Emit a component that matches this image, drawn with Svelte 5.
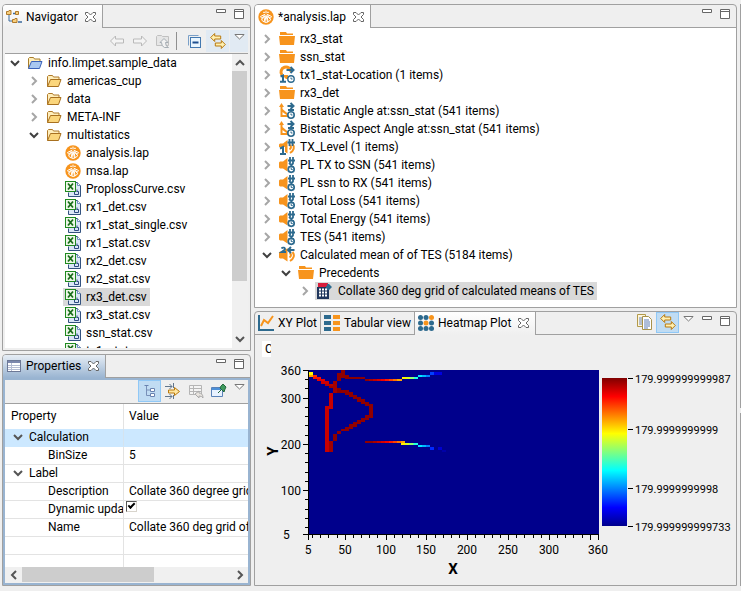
<script>
  const navRows = [
    { level: 0, state: 'open', icon: 'project', text: 'info.limpet.sample_data' },
    { level: 1, state: 'closed', icon: 'dir', text: 'americas_cup' },
    { level: 1, state: 'closed', icon: 'dir', text: 'data' },
    { level: 1, state: 'closed', icon: 'dir', text: 'META-INF' },
    { level: 1, state: 'open', icon: 'dir', text: 'multistatics' },
    { level: 2, icon: 'limpet', text: 'analysis.lap' },
    { level: 2, icon: 'limpet', text: 'msa.lap' },
    ...['ProplossCurve', 'rx1_det', 'rx1_stat_single', 'rx1_stat', 'rx2_det', 'rx2_stat', 'rx3_det', 'rx3_stat', 'ssn_stat', 'tx1_stat'].map(
      (n) => ({ level: 2, icon: 'csv', text: n + '.csv', selected: n === 'rx3_det' })
    )
  ];

  const dataRows = [
    { level: 0, state: 'closed', icon: 'folder', text: 'rx3_stat' },
    { level: 0, state: 'closed', icon: 'folder', text: 'ssn_stat' },
    { level: 0, state: 'closed', icon: 'location', text: 'tx1_stat-Location (1 items)' },
    { level: 0, state: 'closed', icon: 'folder', text: 'rx3_det' },
    { level: 0, state: 'closed', icon: 'angle', text: 'Bistatic Angle at:ssn_stat (541 items)' },
    { level: 0, state: 'closed', icon: 'angle', text: 'Bistatic Aspect Angle at:ssn_stat (541 items)' },
    { level: 0, state: 'closed', icon: 'level', text: 'TX_Level (1 items)' },
    { level: 0, state: 'closed', icon: 'sound', text: 'PL TX to SSN (541 items)' },
    { level: 0, state: 'closed', icon: 'sound', text: 'PL ssn to RX (541 items)' },
    { level: 0, state: 'closed', icon: 'sound', text: 'Total Loss (541 items)' },
    { level: 0, state: 'closed', icon: 'sound', text: 'Total Energy (541 items)' },
    { level: 0, state: 'closed', icon: 'sound', text: 'TES (541 items)' },
    { level: 0, state: 'open', icon: 'grid2', text: 'Calculated mean of of TES (5184 items)' },
    { level: 1, state: 'open', icon: 'folder', text: 'Precedents' },
    { level: 2, state: 'closed', icon: 'calc', text: 'Collate 360 deg grid of calculated means of TES', selected: true }
  ];

  const props = [
    { group: true, name: 'Calculation', value: '', selected: true },
    { name: 'BinSize', value: '5' },
    { group: true, name: 'Label', value: '' },
    { name: 'Description', value: 'Collate 360 degree grid' },
    { name: 'Dynamic update', check: true },
    { name: 'Name', value: 'Collate 360 deg grid of' },
    { name: '', value: '' },
    { name: '', value: '' }
  ];

  let dynamic = $state(true);

  // Plot area inside the chart drawing
  const L = 54, T = 36, W = 290, H = 164;
  const px = (v) => Math.round(L + ((v - 5) / 355) * W);
  const py = (v) => Math.round(T + H - ((v - 5) / 355) * H);
  const xMinor = Array.from({ length: 36 }, (_, i) => (i + 1) * 10);
  const yMinor = Array.from({ length: 18 }, (_, i) => (i + 1) * 20);
  const xLabels = [5, 50, 100, 150, 200, 250, 300, 360];
  const yLabels = [360, 300, 200, 100, 5];

  // x, y, width, height, colour of each run of equal cells
  const cells = [
    [0, 2, 4, 3, '#ffff00'], [0, 5, 4, 2, '#ffa000'],
    [4, 5, 4, 2, '#ff3000'], [4, 7, 8, 2, '#ff1000'], [8, 9, 8, 2, '#e80000'], [12, 11, 8, 3, '#d00000'],
    [16, 14, 8, 2, '#b80000'], [20, 16, 8, 2, '#a00000'],
    [32, 0, 4, 3, '#900000'], [28, 3, 8, 2, '#900000'], [28, 5, 4, 6, '#900000'], [32, 5, 8, 3, '#900000'], [36, 7, 20, 2, '#8c0000'],
    [24, 11, 4, 12, '#a40000'], [28, 18, 4, 5, '#8c0000'],
    [32, 20, 8, 3, '#900000'], [36, 22, 8, 3, '#900000'], [40, 25, 8, 2, '#900000'], [44, 27, 8, 2, '#900000'],
    [48, 29, 8, 3, '#900000'], [52, 32, 8, 2, '#900000'], [56, 34, 8, 2, '#900000'],
    [60, 34, 4, 14, '#900000'], [56, 45, 8, 3, '#900000'], [52, 48, 8, 2, '#900000'], [48, 50, 8, 2, '#900000'],
    [44, 52, 8, 2, '#900000'], [40, 54, 8, 3, '#900000'], [36, 57, 8, 2, '#900000'], [32, 59, 8, 2, '#900000'],
    [28, 61, 4, 3, '#900000'], [24, 64, 4, 7, '#8c0000'],
    [20, 23, 4, 16, '#c80000'], [16, 36, 4, 46, '#c80000'], [20, 71, 4, 11, '#a00000']
  ];
  const hot = ['#900000', '#900000', '#a80000', '#c00000', '#d80000', '#f00000', '#ff1800', '#ff4000', '#ff7000', '#ffa800'];
  const mild = ['#fff000', '#d8ff20', '#90ff70', '#50ffb0'];
  const cool = ['#00e8ff', '#00b8ff', '#0080ff'];
  hot.forEach((c, i) => cells.push([52 + i * 4, i < 1 ? 7 : 9, 4, 2, c], [56 + i * 4, 71, 4, 2, c]));
  mild.forEach((c, i) => cells.push([93 + i * 4, 7, 4, 2, c], [92 + i * 4, 73, 4, 2, c]));
  cool.forEach((c, i) => cells.push([109 + i * 4, 5, 4, 2, c], [109 + i * 4, 75, 4, 2, c]));
  cells.push([121, 2, 4, 3, '#0040ff'], [125, 2, 8, 3, '#0000e0'], [121, 77, 4, 3, '#0028ff'], [129, 77, 4, 3, '#0000d0'], [133, 80, 4, 2, '#0000a8']);
  cells.push([89, 9, 4, 2, '#ffa800'], [105, 73, 4, 2, '#20ffe0'], [105, 7, 4, 2, '#20ffe0']);

  const scale = [
    [44, '179.999999999987'],
    [95, '179.9999999999'],
    [154, '179.9999999998'],
    [192, '179.999999999733']
  ];
</script>

{#snippet icon(name)}
  <svg class="ic" viewBox="0 0 16 16" aria-hidden="true">
    {#if name === 'project' || name === 'dir'}
      {@const blue = name === 'project'}
      <path d="M1.5 13.5V3.5l1-1h4l1 1.500h5.500v3" fill="#ffeebb" stroke={blue ? '#a77c2b' : '#b07a2a'} />
      <path d="M4.500 6.500h10.500l-2.500 7H1.500z" fill={blue ? '#a9c8f0' : '#fbd67c'} stroke={blue ? '#3a62b8' : '#a8701f'} />
    {:else if name === 'limpet'}
      <circle cx="8" cy="8" r="7.700" fill="#f7941d" />
      <g stroke="#fff" stroke-width="1" stroke-linecap="round" fill="none">
        <path d="M6.500 5.500L2.500 7.500l1.200 1.700zM7 7l-3.500 4 2.300 1.800zM8 7l-1.200 6.300h2.400zM9 7l1.200 5.800L12.500 11zM9.500 5.500l4 2-1.200 1.700z" stroke-linejoin="round" />
        <path d="M5.500 3.300h1.200M9.300 3.300h1.200M8 2v2" />
      </g>
    {:else if name === 'csv'}
      <path d="M6.500 1.500h6l3 3v11h-12v-4" fill="#dbe6f7" stroke="#33527f" />
      <path d="M12.500 1.500v3h3" fill="#fff" stroke="#6f8fbd" />
      <rect x=".5" y=".5" width="10" height="10" fill="#eef8e8" stroke="#1f8a1f" />
      <path d="M3 2.500l5 6M8 2.500l-5 6" stroke="#1b6e1b" stroke-width="1.800" />
      <path d="M9.500 10.500v3h4v-3h-2M12 8.500v2" fill="none" stroke="#2d4a80" />
    {:else if name === 'folder'}
      <path d="M1 1h6l1 1.500h6V4H1zM0 5h16l-1 9H1z" fill="#f7941d" />
    {:else if name === 'location'}
      <path d="M3 8a5 5 0 1 1 9-3" fill="none" stroke="#f7941d" stroke-width="3" />
      <path d="M3 8h6v4H7z" fill="#f7941d" />
      <path d="M7.500 3h6M11.500 0L14.500 3l-3 3" fill="none" stroke="#2d6a8e" stroke-width="2" />
      <path d="M1.500 9.500L4 8.500v6M1 14.700h6" fill="none" stroke="#2d6a8e" stroke-width="2" />
      <circle cx="12" cy="12" r="3.200" fill="#fff" stroke="#2d6a8e" stroke-width="1.400" /><path d="M12 10.500V12h1.500" fill="none" stroke="#2d6a8e" />
    {:else if name === 'angle'}
      <path d="M1.500 14V2h2v4l7 6v2z" fill="#f7941d" /><path d="M0 4l2.500-4L5 4z" fill="#f7941d" />
      <path d="M3.500 9v3h4z" fill="#fff" />
      <path d="M8.500 3h5M11.500 0L14.500 3l-3 3M9 7h6" fill="none" stroke="#2d6a8e" stroke-width="2" />
      <circle cx="12" cy="12" r="3.200" fill="#fff" stroke="#2d6a8e" stroke-width="1.600" /><path d="M12 10.500V12h1.500" fill="none" stroke="#2d6a8e" />
    {:else if name === 'level' || name === 'sound' || name === 'grid2'}
      <path d="M0 5.500l1-1h3L8.500 1v13.500L4 11.500H1l-1-1z" fill="#f7941d" />
      {#if name === 'sound'}
        <path d="M11 0v6M14 0v6M9 3.500h7M10 6l4.500 4M14.500 6l-5 5" fill="none" stroke="#2d6a8e" stroke-width="1.800" />
        <circle cx="12.200" cy="12.300" r="3" fill="#fff" stroke="#2d6a8e" stroke-width="1.700" /><path d="M12.200 10.500v2h1.500" fill="none" stroke="#2d6a8e" />
      {:else}
        <path d="M10.500 6c2 1 2 3 0 4.500M13.500 5c2.500 3 1.500 6.500-2.500 9" fill="none" stroke="#f7941d" stroke-width="2" />
        {#if name === 'level'}
          <path d="M0 8h6v8H0z" fill="#fff" /><path d="M1 9.500L4 8v6.500M1 15h6" fill="none" stroke="#2d6a8e" stroke-width="2" />
          <path d="M10.500 0v7M13.500 0v7M8.500 3.500h7.500" stroke="#2d6a8e" stroke-width="1.800" />
        {:else}
          <path d="M2.500 1.500c1-1.500 4-1 3.500 1L2.500 5H7" fill="none" stroke="#2d6a8e" stroke-width="1.800" />
          <path d="M15.500 3H9M12 0L9 3l3 3" fill="none" stroke="#2d6a8e" stroke-width="2" />
        {/if}
      {/if}
    {:else if name === 'calc'}
      <path d="M0 4h12v12H0z" fill="#20365c" /><path d="M1 0h10v4H1z" fill="#d81e3c" />
      <path d="M10 1h2l3 3-3 3H9V3h1z" fill="#2d6a8e" />
      <path d="M2 6.500h9M2 9.500h9M2 12.500h9" stroke="#fff" stroke-width="1.800" stroke-dasharray="2 1" />
    {:else if name === 'nav'}
      <path d="M.5 2.500h2l.5-1h2v4H.500zM6.500 10.500h2l.5-1h2v4h-4.500z" fill="#f8cf7c" stroke="#b07a2a" />
      <path d="M3 6v6h3" fill="none" stroke="#3c6a9c" /><path d="M7 4.500h3M12 13h4" stroke="#3c6a9c" stroke-width="1.500" />
      <path d="M9.500 2.500h3v3h-3z" fill="#f8cf7c" stroke="#b07a2a" />
    {:else if name === 'table'}
      <rect x="1.500" y="2.500" width="13" height="11" fill="#fff" stroke="#6c7896" /><path d="M2 3h12v2H2z" fill="#7c88ad" />
      <path d="M2 7.500h12M2 9.500h12M2 11.500h12M5.500 5v8" stroke="#b5bdd3" />
    {:else if name === 'back'}
      <path d="M1.500 8L6.500 3v3h8v4h-8v3z" fill="#f4f4f4" stroke="#b9b9b9" />
    {:else if name === 'fwd'}
      <path d="M14.500 8L9.500 3v3h-8v4h8v3z" fill="#f4f4f4" stroke="#b9b9b9" />
    {:else if name === 'up'}
      <path d="M1.500 12.500V3.500l1-1h4l1 1h6v9z" fill="#e6e6e6" stroke="#c0c0c0" />
      <path d="M9 5.500l4 4h-2.500q0 4 3 5h-4q-3-1-3-5H5z" fill="#f2f2f2" stroke="#a5adb3" />
    {:else if name === 'collapse'}
      <path d="M2.500 12.500V2.500h10" fill="none" stroke="#7aa0c8" /><rect x="4.500" y="4.500" width="10" height="10" fill="#eaf6ff" stroke="#4378b0" /><path d="M6.500 9.500h6" stroke="#1f4f8f" stroke-width="2" />
    {:else if name === 'link'}
      <path d="M.700 4.500l4-4v2.500h6v3h-6v2.500z" fill="#fff0b0" stroke="#b8790f" />
      <path d="M15.300 11.500l-4-4v2.500h-6v3h6v2.500z" fill="#fff0b0" stroke="#b8790f" />
    {:else if name === 'tree'}
      <path d="M4.500 3v9.500H9M4.500 7H9" fill="none" stroke="#7890b8" />
      <path d="M2.500 2.500h4M8.500 5.500h4v3h-4zM8.500 10.500h4v3h-4z" fill="#fff" stroke="#6882b0" />
    {:else if name === 'filter'}
      <path d="M0 3.500h7M0 13.500h7M4.500 1l2.500 2.500L4.500 6M4.500 11L7 13.500 4.500 16M8.500 0v5M8.500 12v4" fill="none" stroke="#61768c" />
      <path d="M3.500 7h6V4.500l5 4-5 4V10h-6z" fill="#ffe6a0" stroke="#b8790f" />
    {:else if name === 'restore'}
      <path d="M1.500 2.500h12v9h-12zM1.500 5.500h12M1.500 8.500h12M5.500 3v8" fill="#f4f4f4" stroke="#b5b5b5" />
      <path d="M7 11l4-3v2q4 0 4 5-1-2-4-2v2z" fill="#e8e4df" stroke="#aaa" />
    {:else if name === 'pin'}
      <path d="M.5 4.500h11v9H.5z" fill="#e8f2ff" stroke="#5a82b8" /><path d="M1 5h10v2H1z" fill="#4c90d8" />
      <path d="M7 10l3-3M9 5l4 4 1-3 1-2-3-3-2 2z" fill="#3f9a5f" stroke="#24683c" />
    {:else if name === 'copy'}
      <path d="M.5.500h8v12h-8z" fill="#fff6dc" stroke="#b39a4a" /><path d="M2 4h3M2 6h3M2 8h3M2 10h3" stroke="#6a86b8" />
      <path d="M5.500 2.500h6l3 3v10h-9z" fill="#fff" stroke="#a8924a" /><path d="M7 6h5M7 8h6M7 10h6M7 12h6M7 14h4" stroke="#5c7cb4" />
    {:else if name === 'xy'}
      <path d="M1 0v15h15" fill="none" stroke="#2d6a8e" stroke-width="2" /><path d="M3 11l3-6 4 3 5-7" fill="none" stroke="#f7941d" stroke-width="2" />
    {:else if name === 'tab'}
      <path d="M0 0h7v4H0zM0 6h7v4H0zM0 12h7v4H0z" fill="#2d6a8e" /><path d="M9 0h7v4H9zM9 6h7v4H9zM9 12h7v4H9z" fill="#f7941d" />
    {:else if name === 'heat'}
      {#each [0, 1, 2] as r}{#each [0, 1, 2] as c}
        <circle cx={2.5 + c * 5.5} cy={2.5 + r * 5.5} r="2.500" fill={(r === 0 && c === 2) || (r === 1 && c === 1) ? '#f7941d' : '#2d6a8e'} />
      {/each}{/each}
    {/if}
  </svg>
{/snippet}

{#snippet close()}
  <button class="close" aria-label="Close"><svg width="11" height="10" viewBox="0 0 11 10"><path d="M.5.500h2.500l2.500 2.500L8 .5h2.500v2L8 5l2.500 2.500v2H8L5.500 7 3 9.500H.5v-2L3 5 .5 2.500z" fill="#fff" stroke="#666" /></svg></button>
{/snippet}

{#snippet sizers()}
  <div class="sizers">
    <button aria-label="Minimize"><svg width="10" height="10"><path d="M.5.500h9v3h-9z" fill="#fff" stroke="#666" /></svg></button>
    <button aria-label="Maximize"><svg width="10" height="10"><path d="M.5.500h9v9h-9zM.5 2.500h9" fill="#fff" stroke="#666" /></svg></button>
  </div>
{/snippet}

{#snippet tri()}
  <svg width="11" height="6" viewBox="0 0 11 6"><path d="M.8.500h9.400L5.500 5z" fill="#fff" stroke="#777" /></svg>
{/snippet}

{#snippet chevron(dir, color = '#555')}
  <svg class="chev" width="10" height="10" viewBox="0 0 10 10">
    <path d={{ down: 'M1 3l4 4 4-4', up: 'M1 7l4-4 4 4', right: 'M3 1l4 4-4 4', left: 'M7 1L3 5l4 4' }[dir]} fill="none" stroke={color} stroke-width="2" />
  </svg>
{/snippet}

{#snippet tree(rows)}
  {#each rows as r}
    <li class="lv{r.level}">
      <span class="slot">{#if r.state}{@render chevron(r.state === 'open' ? 'down' : 'right', r.state === 'open' ? '#404040' : '#a6a6a6')}{/if}</span>
      <span class="label" class:sel={r.selected}>{@render icon(r.icon)}<span>{r.text}</span></span>
    </li>
  {/each}
{/snippet}

<div class="workbench">
  <div class="stack">
    <section class="panel nav">
      <header>
        <div class="tab active">{@render icon('nav')}<span>Navigator</span>{@render close()}</div>
        <div class="rest">{@render sizers()}</div>
      </header>
      <div class="inset">
        <div class="toolbar">
          <button class="tool" aria-label="Back">{@render icon('back')}</button>
          <button class="tool" aria-label="Forward">{@render icon('fwd')}</button>
          <button class="tool" aria-label="Up">{@render icon('up')}</button>
          <i class="sep"></i>
          <button class="tool" aria-label="Collapse all">{@render icon('collapse')}</button>
          <button class="tool soft" aria-label="Link with editor">{@render icon('link')}</button>
          <button class="tool menu soft" aria-label="View menu">{@render tri()}</button>
        </div>
        <div class="scrollpane">
          <ul class="tree">{@render tree(navRows)}</ul>
          <div class="vbar"><span>{@render chevron('up')}</span><div class="track"><b></b></div><span>{@render chevron('down')}</span></div>
        </div>
      </div>
    </section>

    <section class="panel props">
      <header>
        <div class="tab active focus">{@render icon('table')}<span>Properties</span>{@render close()}</div>
        <div class="rest">{@render sizers()}</div>
      </header>
      <div class="inset blue">
        <div class="toolbar">
          <button class="tool on" aria-label="Show categories">{@render icon('tree')}</button>
          <button class="tool" aria-label="Show advanced">{@render icon('filter')}</button>
          <button class="tool" aria-label="Restore default">{@render icon('restore')}</button>
          <button class="tool" aria-label="Pin">{@render icon('pin')}</button>
          <button class="tool menu" aria-label="View menu">{@render tri()}</button>
        </div>
        <div class="tablewrap">
          <table>
            <thead><tr><th>Property</th><th>Value</th></tr></thead>
            <tbody>
              {#each props as p}
                <tr class:hl={p.selected}>
                  <td class:group={p.group}>
                    {#if p.group}<span class="slot">{@render chevron('down')}</span>{/if}{#if p.check}<label for="dyn">{p.name}</label>{:else}{p.name}{/if}
                  </td>
                  <td class:chk={p.check}>{#if p.check}<input id="dyn" type="checkbox" bind:checked={dynamic} />{:else}{p.value}{/if}</td>
                </tr>
              {/each}
            </tbody>
          </table>
        </div>
        <div class="hbar"><span>{@render chevron('left')}</span><div class="track"><b></b></div><span>{@render chevron('right')}</span></div>
      </div>
    </section>
  </div>

  <div class="stack">
    <section class="panel editor">
      <header>
        <div class="tab active">{@render icon('limpet')}<span>*analysis.lap</span>{@render close()}</div>
        <div class="rest">{@render sizers()}</div>
      </header>
      <ul class="tree wide">{@render tree(dataRows)}</ul>
    </section>

    <section class="panel plot">
      <header>
        <button class="tab">{@render icon('xy')}<span>XY Plot</span></button>
        <button class="tab">{@render icon('tab')}<span>Tabular view</span></button>
        <div class="tab active grey">{@render icon('heat')}<span>Heatmap Plot</span>{@render close()}</div>
        <div class="rest">
          <button class="tool" aria-label="Copy">{@render icon('copy')}</button>
          <button class="tool on" aria-label="Link">{@render icon('link')}</button>
          <button class="tool menu" aria-label="View menu">{@render tri()}</button>
          {@render sizers()}
        </div>
      </header>
      <svg class="chart" viewBox="0 1 481 250" role="img" aria-label="Heatmap Plot">
        <defs>
          <linearGradient id="jet" x1="0" y1="0" x2="0" y2="1">
            <stop offset="0" stop-color="#800000" /><stop offset=".125" stop-color="#f00" />
            <stop offset=".375" stop-color="#ff0" /><stop offset=".625" stop-color="#0ff" />
            <stop offset=".875" stop-color="#00f" /><stop offset="1" stop-color="#00008c" />
          </linearGradient>
          <clipPath id="corner"><path d="M7 7h9v16H7z" /></clipPath>
        </defs>
        <path d="M7 7h9v16H7z" fill="#fff" />
        <text x="10" y="19" clip-path="url(#corner)">C</text>
        <g shape-rendering="crispEdges">
          <rect x={L} y={T} width={W} height={H} fill="#00008c" />
          {#each cells as [x, y, w, h, c]}<rect x={L + x} y={T + y} width={w} height={h} fill={c} />{/each}
          <rect x={L - 1} y={T} width="1" height={H + 1} />
          <rect x={L - 1} y={T + H} width={W + 1} height="1" />
          {#each xMinor as v}<rect x={px(v) - 1} y={T + H} width="1" height={v % 50 ? 4 : 6} />{/each}
          {#each yMinor as v}<rect x={L - 4} y={py(v)} width="4" height="1" />{/each}
          {#each xLabels as v}<rect x={px(v) - 1} y={T + H} width="1" height="6" />{/each}
          {#each yLabels as v}<rect x={L - 6} y={py(v)} width="6" height="1" />{/each}
          <rect x="347" y="44" width="25" height="148" fill="url(#jet)" />
          {#each scale as [y]}<rect x="373" y={y} width="5" height="1" />{/each}
        </g>
        {#each xLabels as v}<text x={px(v) - 1} y="220" text-anchor="middle">{v}</text>{/each}
        {#each yLabels as v}<text x={v === 5 ? 28 : 46} y={py(v) + 5} text-anchor={v === 5 ? 'start' : 'end'}>{v}</text>{/each}
        {#each scale as [y, t]}<text class="scale" x="380" y={y + 5}>{t}</text>{/each}
        <text class="axis" x="198" y="240" text-anchor="middle">X</text>
        <text class="axis" transform="translate(23 117) rotate(-90)" text-anchor="middle">Y</text>
      </svg>
    </section>
  </div>

  <div class="stack edge"><i class="e1"></i><i class="e2"></i></div>
</div>

<style>
  :global(body) { background: #efefef; }
  .workbench {
    box-sizing: border-box;
    height: 100vh;
    padding: 4px 0 5px 2px;
    display: grid;
    grid-template-columns: minmax(0, 249fr) minmax(0, 483fr) 1px;
    gap: 3px;
    font: 12px/18px Roboto, "Open Sans", sans-serif;
    color: #000;
    overflow: hidden;
  }
  .stack { display: flex; flex-direction: column; gap: 3px; min-height: 0; }
  .panel {
    display: flex; flex-direction: column; min-height: 0;
    border: 1px solid #a0a0a0; border-radius: 4px 4px 0 0; overflow: hidden;
  }
  .nav { flex: 347 1 0; }
  .props { flex: 232 1 0; }
  .editor { flex: 304 1 0; }
  .plot { flex: 275 1 0; }
  .edge { gap: 5px; }
  .edge i { background: #a0a0a0; }
  .e1 { flex: 404 1 0; }
  .e2 { flex: 173 1 0; }

  button { font: inherit; color: inherit; border: 0; padding: 0; margin: 0; background: none; display: flex; align-items: center; }
  .ic { width: 16px; height: 16px; flex: none; overflow: visible; }
  header { display: flex; height: 23px; flex: none; }
  .tab {
    display: flex; align-items: center; gap: 4px; padding: 0 3px; box-sizing: border-box; height: 23px;
    border-right: 1px solid #a0a0a0; border-bottom: 1px solid #a0a0a0; white-space: nowrap; flex: none;
  }
  .tab.active { background: linear-gradient(#fff, #fff); border-bottom: 0; padding-right: 6px; }
  .nav .tab.active { background: linear-gradient(#fff, #efefef); }
  .tab.grey { background: linear-gradient(#fff, #efefef); }
  .props .tab.focus { background: linear-gradient(#e6edf5, #99b4d1); }
  .close { margin-left: 3px; }
  .rest { flex: 1; display: flex; justify-content: flex-end; border-bottom: 1px solid #a0a0a0; min-width: 0; }
  .sizers { display: flex; gap: 8px; padding: 4px 6px 0 0; align-items: flex-start; }

  .inset { flex: 1; min-height: 0; margin: 0 2px 2px; display: flex; flex-direction: column; }
  .blue { margin: 0; border: 2px solid #99b4d1; }
  .toolbar { height: 25px; flex: none; display: flex; justify-content: flex-end; align-items: center; border-bottom: 1px solid #a0a0a0; background: #efefef; }
  .blue .toolbar { height: 23px; }
  .tool { width: 23px; height: 22px; box-sizing: border-box; justify-content: center; }
  .tool.menu { width: 18px; align-items: flex-start; padding-top: 4px; }
  .soft { background: #e1eaf3; margin-left: 1px; }
  .on { background: #c0dcf3; border: 1px solid #90c8f6; }
  .sep { width: 1px; height: 18px; background: #909090; margin: 0 5px 0 2px; }
  .rest .tool { height: 21px; }
  .rest .menu { padding-top: 4px; margin-right: 5px; }

  .scrollpane { flex: 1; min-height: 0; display: flex; background: #fff; }
  .tree { list-style: none; margin: 0; padding: 0; flex: 1; overflow: hidden; }
  .tree li { display: flex; height: 18px; white-space: nowrap; }
  .wide { background: #fff; padding: 2px 2px 0; }
  .slot { width: 20px; flex: none; display: flex; align-items: center; justify-content: center; }
  .lv1 { padding-left: 19px; }
  .lv2 { padding-left: 38px; }
  .label { display: flex; align-items: center; gap: 5px; padding: 0 3px 0 2px; }
  .sel { background: #d9d9d9; }

  .vbar { width: 16px; flex: none; display: flex; flex-direction: column; background: #f0f0f0; }
  .vbar span { height: 17px; display: flex; align-items: center; justify-content: center; }
  .vbar b { display: block; width: 15px; height: 81%; background: #cdcdcd; }
  .track { flex: 1; min-width: 0; }
  .hbar { height: 16px; flex: none; display: flex; background: #f0f0f0; }
  .hbar span { width: 17px; display: flex; align-items: center; justify-content: center; }
  .hbar b { display: block; height: 15px; width: 63%; background: #cdcdcd; }

  .tablewrap { flex: 1; min-height: 0; overflow: hidden; background: #fff; }
  table { width: 100%; table-layout: fixed; border-collapse: separate; border-spacing: 0; }
  th { text-align: left; font-weight: normal; height: 25px; padding: 0 6px; border-right: 1px solid #e3e3e3; box-sizing: border-box; }
  th:first-child { width: 49%; }
  td { height: 18px; line-height: 17px; padding: 0 0 0 43px; box-sizing: border-box; border-right: 1px solid #e3e3e3; border-bottom: 1px solid #e3e3e3; white-space: nowrap; overflow: hidden; }
  th:last-child, td:last-child { border-right: 0; padding-left: 5px; }
  td.group { padding-left: 2px; }
  td .slot { display: inline-flex; width: 22px; vertical-align: middle; }
  .hl td { background: #cce8ff; border-color: #cce8ff #d5e3ee #cce8ff; }
  td.chk:last-child { padding: 0 0 0 2px; vertical-align: top; }
  input {
    appearance: none; display: block; width: 11px; height: 11px; margin: 0; background: #fff;
    border: 1px solid #d8d4cc; border-top-color: #555; border-left-color: #555; box-sizing: border-box;
  }
  input:checked::after { content: ""; display: block; width: 7px; height: 4px; margin: 1px; border: solid #000; border-width: 0 0 2px 2px; box-sizing: border-box; transform: rotate(-45deg); }

  .chart { flex: 1; min-height: 0; width: 100%; display: block; }
  .chart text { font-size: 12px; }
  .chart .scale { font-size: 11px; }
  .chart .axis { font-size: 15px; font-weight: bold; }
</style>
